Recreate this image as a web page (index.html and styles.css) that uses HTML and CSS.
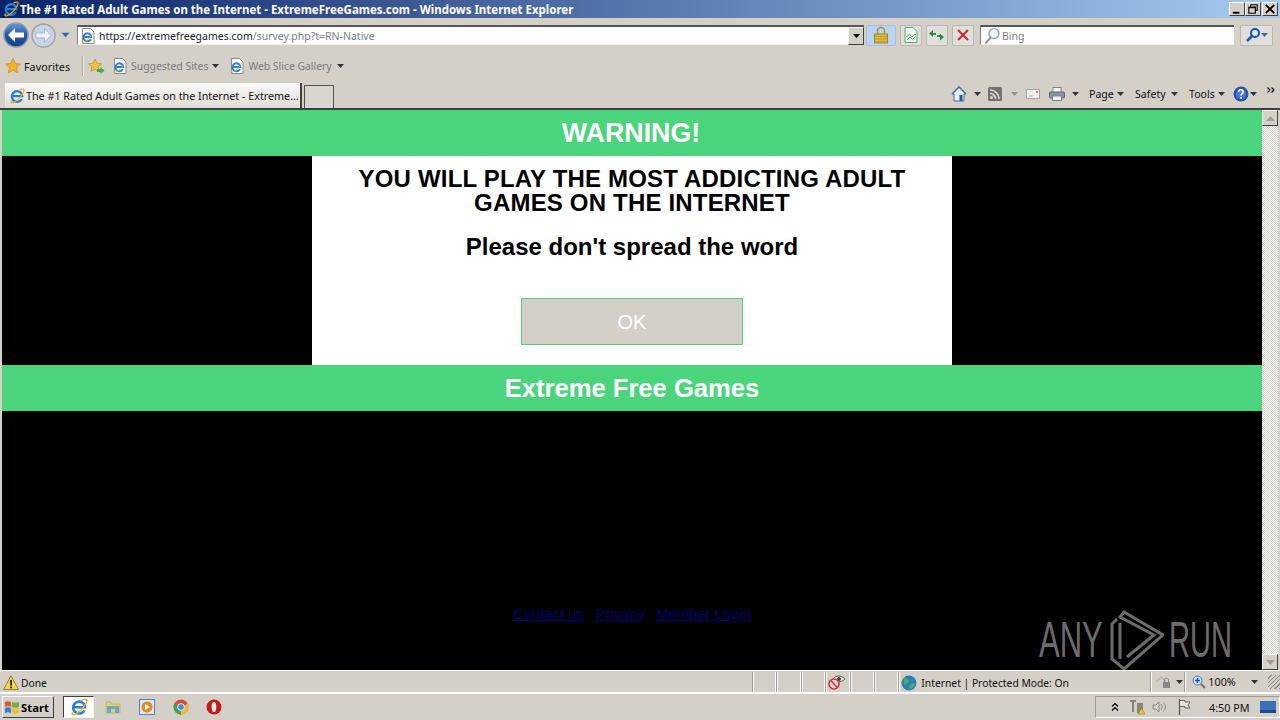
FILE: index.html
```html
<!DOCTYPE html>
<html lang="en">
<head>
<meta charset="utf-8">
<title>The #1 Rated Adult Games on the Internet</title>
<link rel="stylesheet" href="styles.css">
</head>
<body>
<svg class="defs" width="0" height="0">
  <defs>
    <linearGradient id="backfill" x1="0" y1="0" x2="0" y2="1"><stop offset="0" stop-color="#6f9ad6"/><stop offset=".5" stop-color="#2558aa"/><stop offset="1" stop-color="#173f88"/></linearGradient>
    <symbol id="ie" viewBox="0 0 16 16">
      <path d="M12.800 11A5.300 5.300 0 1 1 13.400 8.200H3.500" fill="none" stroke="#2a80d8" stroke-width="2.300"/>
      <path d="M2.500 12.500C.8 15 3 15.800 6 13.800 9.500 11.400 13.500 6.500 15 3 15.600 1 13.500.3 10.500 2" fill="none" stroke="#e8b020" stroke-width="1.200"/>
    </symbol>
    <symbol id="iepage" viewBox="0 0 16 16">
      <path d="M2.500 .5h8l3.500 3.500v11.500h-11.500z" fill="#fff" stroke="#8a8a8a"/>
      <path d="M10.900 11.300A4 4 0 1 1 11.400 9H4.500" fill="none" stroke="#2a80d8" stroke-width="1.900"/>
      <path d="M2.500 12.300C.8 15 3.500 14.800 6 13 9 10.900 11 8.500 12.500 5" fill="none" stroke="#e8b020" stroke-width=".9"/>
    </symbol>
    <symbol id="star" viewBox="0 0 16 16">
      <path d="M8 .5l2.300 5 5.200.6-3.900 3.500 1.100 5.400L8 12.300 3.300 15l1.100-5.400L.5 6.100l5.200-.6z" fill="#f0b030" stroke="#c88a20" stroke-width=".7"/>
    </symbol>
    <symbol id="caret" viewBox="0 0 7 4"><path d="M0 0h7L3.500 4z" fill="#333"/></symbol>
  </defs>
</svg>

<header class="titlebar">
  <svg class="ico16"><use href="#ie"/></svg>
  <span class="title-text">The #1 Rated Adult Games on the Internet - ExtremeFreeGames.com - Windows Internet Explorer</span>
  <div class="winbtns">
    <span class="winbtn"><svg viewBox="0 0 15 12"><path d="M3 9h7v2H3z" fill="#000"/></svg></span>
    <span class="winbtn"><svg viewBox="0 0 15 12"><path d="M5 1.500h7v6H10M5 1.500v2M3 4h7v6.500H3zM3 4.500h7" fill="none" stroke="#000" stroke-width="1.200"/></svg></span>
    <span class="winbtn"><svg viewBox="0 0 15 12"><path d="M3 1.500l9 9M12 1.500l-9 9" stroke="#000" stroke-width="2"/></svg></span>
  </div>
</header>

<section class="navbar">
  <svg class="back" viewBox="0 0 26 26"><circle cx="13" cy="13" r="12" fill="url(#backfill)" stroke="#8a98b0" stroke-width="1.500"/><path d="M5 13l7-7v4.500h9v5h-9V20z" fill="#fff"/></svg>
  <svg class="forward" viewBox="0 0 26 26"><circle cx="13" cy="13" r="12" fill="#c8d4e4" stroke="#a0a0a8" stroke-width="1.500"/><path d="M21 13l-7-7v4.500H5v5h9V20z" fill="#eef2f8" stroke="#8ea4c4" stroke-width=".7"/></svg>
  <svg class="nav-chevron" viewBox="0 0 9 6"><path d="M0 .5h9L4.500 5.500z" fill="#3a6aa8" stroke="#dde"  stroke-width=".4"/></svg>
  <div class="address">
    <svg class="ico16"><use href="#iepage"/></svg>
    <span class="url"><span class="url-host">https://extremefreegames.com</span>/survey.php?t=RN-Native</span>
    <span class="combo"><svg class="caret" viewBox="0 0 7 4"><path d="M0 0h7L3.500 4z" fill="#000"/></svg></span>
  </div>
  <span class="tb lock">
    <svg viewBox="0 0 14 18" class="ico-lock"><path d="M3.500 8V5a3.500 3.500 0 017 0v3" fill="none" stroke="#a89040" stroke-width="1.500"/><rect x=".5" y="8" width="13" height="9" fill="#e0b840" stroke="#a08828"/><path d="M1 10.500h12M1 13h12M1 15.500h12" stroke="#b89828" stroke-width=".8"/></svg>
  </span>
  <span class="tb tb-first">
    <svg viewBox="0 0 14 16" class="ico-tb"><path d="M1 .5h8l4 4v11H1z" fill="#eef8ee" stroke="#5aa870"/><path d="M2.500 10l3-3 2.500 3 3-3 1 1M3 13l3-3 2.500 2.500 3-3" fill="none" stroke="#48a060"/></svg>
  </span>
  <span class="tb">
    <svg viewBox="0 0 16 14" class="ico-tb2"><path d="M7 5H4V2L0 5.500 4 9V7h3z" fill="#2a8a3a"/><path d="M9 9h3v3.500L16 9 12 5.500V7H9z" fill="#2a8a3a" transform="translate(-1 0)"/></svg>
  </span>
  <span class="tb">
    <svg viewBox="0 0 12 12" class="ico-x"><path d="M1 1l10 10M11 1L1 11" stroke="#c83030" stroke-width="2.200"/></svg>
  </span>
  <div class="search">
    <svg viewBox="0 0 16 18" class="ico-search"><circle cx="10" cy="6.500" r="5" fill="#eef4fa" stroke="#8a9ab0" stroke-width="1.200"/><path d="M6.500 10.500L1.500 16.500" stroke="#808080" stroke-width="1.800"/></svg>
    <span class="search-text">Bing</span>
  </div>
  <span class="search-go">
    <svg viewBox="0 0 16 16" class="ico-go"><circle cx="10" cy="6" r="4" fill="#dbe8f8" stroke="#2050a8" stroke-width="2"/><path d="M7 9l-5 5" stroke="#2050a8" stroke-width="2.500"/></svg>
    <svg class="caret caret-blue" viewBox="0 0 7 4"><path d="M0 0h7L3.500 4z" fill="#3a6aa8"/></svg>
  </span>
</section>

<section class="favbar">
  <svg class="ico16"><use href="#star"/></svg>
  <span class="fav-label">Favorites</span>
  <span class="fav-sep"></span>
  <svg class="ico-addfav" viewBox="0 0 17 16"><path d="M7 1l2 4.300 4.500.5-3.300 3 .9 4.700L7 11.200 2.900 13.500l.9-4.700-3.300-3 4.500-.5z" fill="#f0c040" stroke="#b89028" stroke-width=".7"/><path d="M9 11h3.500V9l4 3.500-4 3.500v-2H9z" fill="#48a838"/></svg>
  <svg class="ico16 fav-page"><use href="#iepage"/></svg>
  <span class="fav-link fav-sug">Suggested Sites</span>
  <svg class="caret"><use href="#caret"/></svg>
  <svg class="ico16 fav-page2"><use href="#iepage"/></svg>
  <span class="fav-link fav-web">Web Slice Gallery</span>
  <svg class="caret"><use href="#caret"/></svg>
</section>

<section class="tabbar">
  <div class="tab">
    <svg class="ico16"><use href="#ie"/></svg>
    <span class="tab-text">The #1 Rated Adult Games on the Internet - Extreme...</span>
  </div>
  <div class="newtab"></div>
  <div class="cmd">
    <svg class="ico-home" viewBox="0 0 16 16"><path d="M8 1L1 8h2v7h10V8h2z" fill="#e8eef6" stroke="#4a6a9a"/><path d="M1 8l7-7 7 7" fill="none" stroke="#3a6ab0" stroke-width="1.500"/><rect x="8.500" y="9" width="3" height="6" fill="#2a5a8a"/></svg>
    <svg class="caret c-home"><use href="#caret"/></svg>
    <svg class="ico-rss" viewBox="0 0 14 14"><rect width="14" height="14" rx="1.500" fill="#77716b"/><circle cx="3.500" cy="10.500" r="1.500" fill="#ddd"/><path d="M2 6.500a5.500 5.500 0 015.500 5.500M2 3a9 9 0 019 9" fill="none" stroke="#ddd" stroke-width="1.500"/></svg>
    <svg class="caret c-rss caret-dim"><use href="#caret"/></svg>
    <svg class="ico-mail" viewBox="0 0 14 10"><rect x=".5" y=".5" width="13" height="9" fill="#f2f0ec" stroke="#a8a4a0"/><path d="M3 7h4" stroke="#b0a8a0"/><rect x="10" y="2" width="2" height="2" fill="#c08070"/></svg>
    <svg class="ico-print" viewBox="0 0 16 14"><rect x="4" y=".5" width="8" height="5" fill="#f4f4f4" stroke="#808080"/><rect x=".5" y="5" width="15" height="6" rx="1" fill="#8a949e" stroke="#60686f"/><rect x="3.500" y="9" width="9" height="4.500" fill="#f4f4f4" stroke="#808080"/></svg>
    <svg class="caret c-print"><use href="#caret"/></svg>
    <span class="cmd-text c-page">Page</span>
    <svg class="caret c-next"><use href="#caret"/></svg>
    <span class="cmd-text c-safety">Safety</span>
    <svg class="caret c-next"><use href="#caret"/></svg>
    <span class="cmd-text c-tools">Tools</span>
    <svg class="caret c-next"><use href="#caret"/></svg>
    <svg class="ico-help" viewBox="0 0 16 16"><circle cx="8" cy="8" r="7.500" fill="#2a50b0"/><circle cx="8" cy="8" r="5" fill="#4a78d0"/><path d="M5.800 6a2.200 2 0 114 .8C9 7.800 8 8 8 9.500" fill="none" stroke="#fff" stroke-width="1.600"/><rect x="7.200" y="11" width="1.700" height="1.700" fill="#fff"/></svg>
    <svg class="caret c-help"><use href="#caret"/></svg>
    <svg class="ico-more" viewBox="0 0 8 6"><path d="M.5.500L3 3 .5 5.500M4.500.500L7 3 4.500 5.500" fill="none" stroke="#000" stroke-width="1.100"/></svg>
  </div>
</section>

<main class="viewport">
  <div class="page">
    <div class="green-bar warning">WARNING!</div>
    <div class="dialog">
      <h1 class="headline">YOU WILL PLAY THE MOST ADDICTING ADULT GAMES ON THE INTERNET</h1>
      <p class="sub">Please don't spread the word</p>
      <button class="ok" type="button">OK</button>
    </div>
    <div class="green-bar">Extreme Free Games</div>
    <nav class="links">
      <a href="#">Contact us</a>
      <a href="#">Privacy</a>
      <a href="#">Member Login</a>
    </nav>
    <div class="watermark">
      <span class="wm-text wm-any">ANY</span>
      <svg class="wm-logo" viewBox="0 0 54 60"><path d="M7 9L2 14V49L14 59L53 25L14 2L10 7L44 25L17 47M10 13V49" fill="none" stroke="#6c6c6c" stroke-width="3"/></svg>
      <span class="wm-text wm-run">RUN</span>
    </div>
  </div>
  <div class="scrollbar">
    <span class="sb-btn"><svg viewBox="0 0 9 5"><path d="M0 5h9L4.500 0z" fill="#a09c98"/></svg></span>
    <span class="sb-track"></span>
    <span class="sb-btn"><svg viewBox="0 0 9 5"><path d="M0 0h9L4.500 5z" fill="#a09c98"/></svg></span>
  </div>
</main>

<footer class="statusbar">
  <svg class="ico-warn" viewBox="0 0 16 15"><path d="M8 .8L15.500 14.500H.5z" fill="#f8d840" stroke="#908040"/><rect x="7.200" y="5" width="1.800" height="5.500" fill="#222"/><rect x="7.200" y="11.500" width="1.800" height="1.800" fill="#222"/></svg>
  <span class="status-text">Done</span>
  <span class="cell c1"></span><span class="cell c1"></span><span class="cell c1"></span>
  <span class="cell c1 cell-icon"><svg viewBox="0 0 18 16" class="ico-eye"><path d="M5 5c3-4 8-4 12 0-3 3-8 4-12 0z" fill="#eee" stroke="#555"/><circle cx="11" cy="5" r="2" fill="#444"/><circle cx="6" cy="10" r="5" fill="#f4d8d8" stroke="#c83838" stroke-width="1.600"/><path d="M3 6.500l6 7" stroke="#c83838" stroke-width="1.600"/></svg></span>
  <span class="cell c1"></span><span class="cell c1"></span>
  <span class="cell zone">
    <svg viewBox="0 0 16 16" class="ico-globe"><circle cx="8" cy="8" r="7.500" fill="#2a80b8"/><path d="M3 3c3 0 5 1 5 3S5 8 4 10 2 6 3 3zM9 9c2-1 5-1 5 0s-2 5-4 5-2-4-1-5z" fill="#50a868"/></svg>
    Internet | Protected Mode: On
  </span>
  <span class="cell sec"><svg viewBox="0 0 16 14" class="ico-sec"><path d="M1 7l5-5 5 5" fill="none" stroke="#b8b4ae" stroke-width="1.500"/><rect x="8" y="7" width="7" height="6" fill="#888"/><path d="M9.500 7V5a2 2 0 014 0v2" fill="none" stroke="#888"/></svg><svg class="caret"><use href="#caret"/></svg></span>
  <span class="cell zoom">
    <svg viewBox="0 0 14 14" class="ico-zoom"><circle cx="5.500" cy="5.500" r="4.500" fill="#cfe0f4" stroke="#5078b0"/><path d="M3 5.500h5M5.500 3v5" stroke="#1f50b0" stroke-width="1.500"/><path d="M9 9l4 4" stroke="#807060" stroke-width="2"/></svg>
    <span class="zoom-val">100%</span>
    <svg class="caret"><use href="#caret"/></svg>
  </span>
  <span class="grip"></span>
</footer>

<footer class="taskbar">
  <button class="start" type="button">
    <svg viewBox="0 0 16 14" class="ico-start"><path d="M1 2c2-1 4-1 6 0v5C5 6 3 6 1 7z" fill="#e05a30"/><path d="M8 2c2 1 4 1 7 0v5c-3 1-5 1-7 0z" fill="#70b040"/><path d="M1 8c2-1 4-1 6 0v5c-2-1-4-1-6 0z" fill="#3a80d0"/><path d="M8 8c2 1 4 1 7 0v5c-3 1-5 1-7 0z" fill="#e8c030"/></svg>
    Start
  </button>
  <span class="task-active"><svg class="ico-task"><use href="#ie"/></svg></span>
  <svg class="quick q-folder" viewBox="0 0 16 16"><path d="M1 3h5l1 2h8v9H1z" fill="#e8cc70" stroke="#b8a050" stroke-width=".6"/><path d="M2 7h12v7H10v-4H6v4H2z" fill="#6aa8c8"/></svg>
  <svg class="quick q-media" viewBox="0 0 16 16"><rect x=".5" y=".5" width="15" height="15" fill="#dce6f2" stroke="#5a80c0"/><circle cx="8" cy="8" r="5.500" fill="#e88820"/><path d="M6 5l5 3-5 3z" fill="#fff"/></svg>
  <svg class="quick q-chrome" viewBox="0 0 16 16"><circle cx="8" cy="8" r="7.500" fill="#d8483c"/><path d="M8 8L1.500 4.300A7.500 7.500 0 008 15.500z" fill="#48a050"/><path d="M8 8v7.500A7.500 7.500 0 0014.800 4.800z" fill="#e8c030"/><circle cx="8" cy="8" r="3.400" fill="#4a88d8" stroke="#f0f0f0"/></svg>
  <svg class="quick q-opera" viewBox="0 0 16 16"><circle cx="8" cy="8" r="7.500" fill="#c81818"/><ellipse cx="8" cy="8" rx="2.300" ry="5" fill="#f4f0f0"/></svg>
  <div class="tray">
    <svg class="tray-up" viewBox="0 0 8 8"><path d="M1 3.500L4 .5l3 3M1 7.500l3-3 3 3" fill="none" stroke="#000" stroke-width="1.200"/></svg>
    <svg class="tray-net" viewBox="0 0 16 16"><path d="M1 1h6v2H5v10H3V3H1zM8 4h6v10H8z" fill="#8a8478"/><path d="M9 15l3.500-6 3.500 6z" fill="#f0c830" stroke="#806818" stroke-width=".5"/></svg>
    <svg class="tray-vol" viewBox="0 0 16 14"><path d="M1 5h3l3-3v10l-3-3H1z" fill="#d8d4cc" stroke="#8a8680"/><path d="M9 4c1.500 2 1.500 4 0 6M11.500 2.500c2.500 3 2.500 6 0 9" fill="none" stroke="#908c86"/></svg>
    <svg class="tray-flag" viewBox="0 0 14 16"><path d="M1.500 0v16" stroke="#555" stroke-width="1.200"/><path d="M2 1.500h5v1.500h5l-2 3 2 3H7V7.500H2" fill="#e8e4dc" stroke="#666"/></svg>
    <span class="clock">4:50 PM</span>
    <svg class="tray-desk" viewBox="0 0 16 12"><rect width="16" height="12" fill="#3a70b8"/><path d="M0 9h16v3H0z" fill="#1d4a88"/></svg>
  </div>
</footer>
</body>
</html>
```
FILE: styles.css
```css
* { box-sizing: border-box; }
html, body { margin: 0; padding: 0; }
body {
  width: 1280px;
  height: 720px;
  overflow: hidden;
  background: #d4d0c8;
  display: flex;
  flex-direction: column;
  font-family: "Noto Sans", "Open Sans", sans-serif;
  font-size: 11px;
  color: #111;
}
.defs { position: absolute; }
svg { display: block; flex: none; }
.ico16 { width: 16px; height: 16px; }
.caret { width: 7px; height: 4px; }

/* title bar */
.titlebar {
  height: 18px;
  display: flex;
  align-items: center;
  padding-left: 3px;
  background: linear-gradient(90deg, #0a246a 0%, #a6caf0 100%);
}
.title-text {
  margin-left: 1px;
  color: #fff;
  font-weight: 700;
  font-size: 11.470px;
  white-space: nowrap;
}
.winbtns { margin-left: auto; margin-right: 2px; display: flex; }
.winbtn {
  width: 16px;
  height: 14px;
  background: #d4d0c8;
  border: 1px solid;
  border-color: #fff #404040 #404040 #fff;
}
.winbtn svg { width: 14px; height: 12px; }
.winbtn:last-child { margin-left: 1px; }

/* navigation */
.navbar {
  height: 28px;
  display: flex;
  align-items: center;
  padding: 7px 6px 1px 3px;
}
.back { width: 26px; height: 26px; }
.forward { width: 25px; height: 25px; margin-left: 2px; }
.nav-chevron { width: 9px; height: 6px; margin-left: 5px; }
.address {
  width: 787px;
  height: 20px;
  margin-left: 7px;
  display: flex;
  align-items: center;
  padding-left: 2px;
  background: #fff;
  border-top: 2px solid #555;
  border-left: 1px solid #808080;
  border-bottom: 1px solid #eee;
}
.url { margin-left: 3px; color: #808080; font-size: 10.500px; white-space: nowrap; }
.url-host { color: #222; }
.combo {
  margin-left: auto;
  width: 16px;
  height: 18px;
  display: flex;
  align-items: center;
  justify-content: center;
  background: #d4d0c8;
  border: 1px solid;
  border-color: #f4f4f4 #404040 #404040 #f4f4f4;
}
.tb {
  width: 22px;
  height: 21px;
  margin-left: 4px;
  display: flex;
  align-items: center;
  justify-content: center;
  border: 1px solid #bcb8b0;
  border-radius: 2px;
  background: #dfe0dc;
}
.tb.lock { width: 30px; margin-left: 2px; background: #b9d3f0; border-color: #a8c0dc; }
.tb.tb-first { margin-left: 4px; }
.ico-lock { width: 14px; height: 18px; }
.ico-tb { width: 14px; height: 16px; }
.ico-tb2 { width: 16px; height: 14px; }
.ico-x { width: 12px; height: 12px; }
.search {
  width: 254px;
  height: 20px;
  margin-left: 6px;
  display: flex;
  align-items: center;
  padding-left: 3px;
  background: #fff;
  border-top: 2px solid #555;
  border-left: 1px solid #808080;
  border-bottom: 1px solid #eee;
}
.ico-search { width: 16px; height: 18px; }
.search-text { margin-left: 2px; color: #808080; font-size: 10.500px; }
.search-go {
  width: 33px;
  height: 21px;
  margin-left: 6px;
  display: flex;
  align-items: center;
  justify-content: space-between;
  padding: 0 4px;
  border: 1px solid #bcb8b0;
  border-radius: 2px;
  background: #dfe0dc;
}
.ico-go { width: 16px; height: 16px; }

/* favorites */
.favbar {
  height: 36px;
  display: flex;
  align-items: center;
  padding: 4px 0 0 5px;
}
.fav-label { margin-left: 3px; width: 58px; white-space: nowrap; font-size: 10.800px; }
.fav-sep { width: 1px; height: 20px; background: #a8a49c; box-shadow: 1px 0 #f0f0f0; }
.ico-addfav { width: 17px; height: 16px; margin-left: 5px; }
.fav-page { margin-left: 7px; }
.fav-page2 { margin-left: 10px; }
.fav-link { margin-left: 3px; color: #7a7a7a; white-space: nowrap; font-size: 10.400px; }
.fav-web { margin-left: 3px; }
.fav-sug + .caret { margin-left: 4px; }
.fav-web + .caret { margin-left: 5px; }

/* tabs and command bar */
.tabbar {
  height: 26px;
  display: flex;
  align-items: flex-end;
  padding-left: 5px;
}
.tab {
  width: 297px;
  height: 25px;
  display: flex;
  align-items: center;
  gap: 1px;
  padding-left: 4px;
  background: linear-gradient(#fbfbfa, #dedbd5);
  border-right: 2px solid #404040;
  white-space: nowrap;
}
.tab-text { font-size: 10.740px; }
.newtab {
  width: 30px;
  height: 23px;
  margin-left: 2px;
  border: 1px solid #505050;
  border-bottom: 0;
  background: #d8d5ce;
}
.cmd {
  margin-left: auto;
  width: 330px;
  height: 26px;
  display: flex;
  align-items: center;
  font-size: 10.600px;
  padding: 0 0 2px 1px;
}
.cmd-text { white-space: nowrap; }
.ico-home { width: 16px; height: 16px; }
.c-home { margin-left: 7px; }
.ico-rss { width: 14px; height: 14px; margin-left: 7px; }
.c-rss { margin-left: 9px; }
.caret-dim { opacity: .4; }
.ico-mail { width: 14px; height: 10px; margin-left: 8px; }
.ico-print { width: 16px; height: 14px; margin-left: 9px; }
.c-print { margin-left: 7px; }
.c-page { margin-left: 10px; width: 25px; }
.c-next { margin-left: 3px; }
.c-safety { margin-left: 11px; width: 33px; }
.c-tools { margin-left: 11px; width: 26px; }
.ico-help { width: 16px; height: 16px; margin-left: 8px; }
.c-help { margin-left: 1px; }
.ico-more { width: 8px; height: 6px; margin-left: 10px; margin-top: -8px; }

/* page */
.viewport {
  height: 562px;
  display: flex;
  padding: 0 2px;
  border-top: 2px solid #404040;
  background: #d4d0c8;
}
.page {
  position: relative;
  width: 1260px;
  background: #000;
  display: flex;
  flex-direction: column;
  font-family: "Liberation Sans", Arial, sans-serif;
}
.green-bar {
  height: 46px;
  display: flex;
  align-items: center;
  justify-content: center;
  background: #4ad47c;
  color: #fff;
  font-size: 25.600px;
  font-weight: 700;
}
.green-bar.warning { font-size: 26.800px; padding-right: 2px; }
.dialog {
  width: 640px;
  height: 209px;
  margin: 0 auto;
  padding: 11px 30px 0;
  background: #fff;
  color: #000;
  text-align: center;
  display: flex;
  flex-direction: column;
  align-items: center;
}
.headline { margin: 0; font-size: 24px; line-height: 24px; font-weight: 700; letter-spacing: .18px; }
.sub { margin: 20px 0 0; font-size: 24px; line-height: 24px; font-weight: 700; }
.ok {
  width: 222px;
  height: 47px;
  margin-top: 39px;
  padding-top: 3px;
  background: #d4d0c8;
  color: #fff;
  border: 1px solid #4ad47c;
  font-family: "Liberation Sans", Arial, sans-serif;
  font-size: 20px;
}
.links {
  margin-top: 193px;
  display: flex;
  justify-content: center;
  gap: 12px;
  font-size: 14.800px;
  line-height: 20px;
}
.links a { color: #00006e; }
.watermark {
  position: absolute;
  left: 1037px;
  top: 500px;
  height: 60px;
  display: flex;
  align-items: center;
}
.wm-text {
  display: block;
  color: #6c6c6c;
  font-size: 50px;
  line-height: 50px;
  white-space: nowrap;
  transform: scaleX(.62);
}
.wm-any { width: 64px; transform-origin: 0 50%; }
.wm-run { width: 72px; transform-origin: 0 50%; margin-left: 5px; transform: scaleX(.58); }
.wm-logo { width: 54px; height: 60px; margin-left: 7px; }

/* scrollbar */
.scrollbar {
  width: 16px;
  display: flex;
  flex-direction: column;
}
.sb-btn {
  height: 16px;
  display: flex;
  align-items: center;
  justify-content: center;
  background: #d4d0c8;
  border: 1px solid;
  border-color: #f4f4f4 #404040 #404040 #f4f4f4;
}
.sb-btn svg { width: 9px; height: 5px; }
.sb-track {
  flex: 1;
  background: repeating-conic-gradient(#fff 0 25%, #d4d0c8 0 50%) 0 0 / 2px 2px;
}

/* status */
.statusbar {
  height: 24px;
  display: flex;
  align-items: center;
  padding: 1px 0 0 3px;
  border-top: 1px solid #fff;
  border-bottom: 2px solid #fff;
  font-size: 10.300px;
  line-height: 22px;
}
.ico-warn { width: 16px; height: 15px; }
.status-text { margin-left: 2px; width: 731px; padding-top: 1px; }
.cell {
  height: 20px;
  display: flex;
  align-items: center;
  border-left: 1px solid #a09c94;
  box-shadow: inset 1px 0 #fff;
}
.c1 { width: 24.400px; border-right: 1px solid #fff; }
.cell-icon { justify-content: center; }
.ico-eye { width: 18px; height: 16px; }
.zone { width: 252px; gap: 4px; padding: 1px 0 0 2px; white-space: nowrap; }
.ico-globe { width: 16px; height: 16px; }
.sec { width: 34px; gap: 5px; padding-left: 4px; }
.ico-sec { width: 16px; height: 14px; }
.zoom { width: 82px; padding-left: 7px; gap: 2px; font-size: 10.800px; }
.ico-zoom { width: 14px; height: 14px; }
.zoom-val { width: 41px; }
.grip {
  width: 12px;
  height: 14px;
  margin-left: auto;
  background: repeating-linear-gradient(135deg, #d4d0c8 0 2px, #908c84 2px 3px);
}

/* taskbar */
.taskbar {
  flex: 1;
  display: flex;
  align-items: center;
  padding: 0 0 0 2px;
  min-height: 0;
}
.start {
  width: 52px;
  height: 22px;
  display: flex;
  align-items: center;
  gap: 1px;
  padding: 0 0 0 1px;
  background: #d4d0c8;
  border: 1px solid;
  border-color: #fff #404040 #404040 #fff;
  font-family: "Noto Sans", sans-serif;
  font-size: 11.300px;
  font-weight: 700;
  color: #000;
}
.ico-start { width: 16px; height: 14px; }
.task-active {
  width: 31px;
  height: 22px;
  margin-left: 9px;
  display: flex;
  align-items: center;
  justify-content: center;
  background: #fff;
  border: 1px solid;
  border-color: #404040 #f4f4f4 #f4f4f4 #404040;
}
.ico-task { width: 18px; height: 18px; }
.quick { width: 16px; height: 16px; }
.q-folder { margin-left: 11px; }
.q-media { margin-left: 18px; }
.q-chrome { margin-left: 18px; }
.q-opera { margin-left: 17px; }
.tray {
  margin-left: auto;
  width: 185px;
  height: 22px;
  display: flex;
  align-items: center;
  padding-left: 15px;
  border: 1px solid;
  border-color: #a09c94 #fff #fff #a09c94;
}
.tray-up { width: 8px; height: 8px; }
.tray-net { width: 16px; height: 16px; margin-left: 10px; }
.tray-vol { width: 16px; height: 14px; margin-left: 7px; }
.tray-flag { width: 14px; height: 16px; margin-left: 10px; }
.clock { margin-left: 17px; width: 45px; white-space: nowrap; font-size: 10.800px; }
.tray-desk { width: 16px; height: 12px; margin-left: 6px; }
```
